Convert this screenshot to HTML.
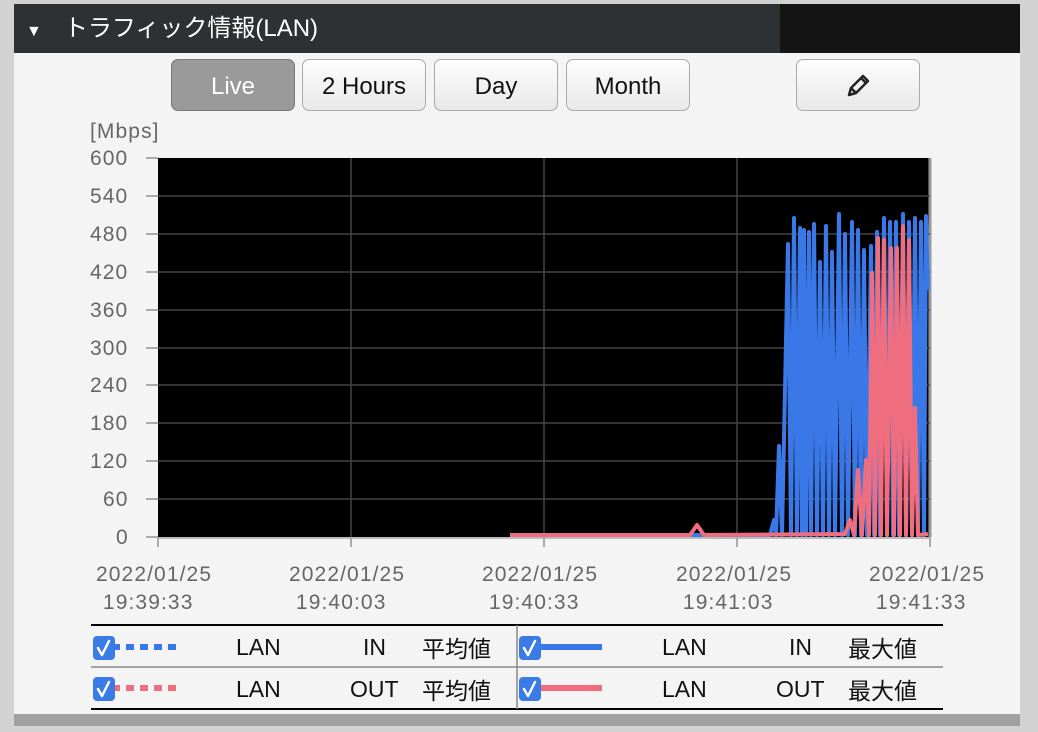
<!DOCTYPE html>
<html><head><meta charset="utf-8"><style>
body{margin:0;width:1038px;height:732px;background:#d2d2d2;font-family:"Liberation Sans","Noto Sans CJK JP",sans-serif;position:relative;overflow:hidden}
.panel{position:absolute;left:14px;top:4px;width:1006px;height:710px;background:#f4f4f4}
.shadow{position:absolute;left:14px;top:714px;width:1006px;height:12px;background:#a0a0a0}
.hdr{position:absolute;left:14px;top:4px;width:766px;height:49px;background:#2e3133;color:#fff;font-size:24px;line-height:49px}
.hdr2{position:absolute;left:780px;top:4px;width:240px;height:49px;background:#141414}
.btn{position:absolute;top:59px;height:52px;border:1px solid #aaa;border-radius:7px;background:linear-gradient(#fdfdfd,#e8e8e8);font-size:24px;text-align:center;line-height:54px;color:#111;box-sizing:border-box}
.lbl{position:absolute;font-size:21px;color:#666;letter-spacing:1.1px}
.t{position:absolute;font-size:23px;color:#111}
.cb{position:absolute;width:22px;height:22px;background:#3a7be6;border-radius:4px}
</style></head><body>
<div class="panel"></div><div class="shadow"></div>
<div class="hdr"><span style="font-size:16px;margin-left:12px;margin-right:22px">▼</span>トラフィック情報(LAN)</div>
<div class="hdr2"></div>
<div class="btn" style="left:171px;width:124px;background:#9a9a9a;border-color:#777;color:#fff">Live</div>
<div class="btn" style="left:302px;width:124px">2 Hours</div>
<div class="btn" style="left:434px;width:124px">Day</div>
<div class="btn" style="left:566px;width:124px">Month</div>
<div class="btn" style="left:796px;width:124px"><svg width="30" height="30" viewBox="0 0 30 30" style="margin-top:11px"><path d="M6 24 L8 17 L20 5 L25 10 L13 22 Z M8 17 L13 22 M18 7 L23 12" fill="none" stroke="#222" stroke-width="2.5" stroke-linejoin="round"/></svg></div>
<div class="lbl" style="left:90px;top:120px">[Mbps]</div>
<div class="lbl" style="left:90px;top:147px">600</div>
<div class="lbl" style="left:90px;top:185px">540</div>
<div class="lbl" style="left:90px;top:223px">480</div>
<div class="lbl" style="left:90px;top:261px">420</div>
<div class="lbl" style="left:90px;top:299px">360</div>
<div class="lbl" style="left:90px;top:337px">300</div>
<div class="lbl" style="left:90px;top:374px">240</div>
<div class="lbl" style="left:90px;top:412px">180</div>
<div class="lbl" style="left:90px;top:450px">120</div>
<div class="lbl" style="left:103px;top:488px">60</div>
<div class="lbl" style="left:116px;top:526px">0</div>
<div class="lbl" style="left:96px;top:561px;line-height:28px">2022/01/25<br>&nbsp;19:39:33</div>
<div class="lbl" style="left:289px;top:561px;line-height:28px">2022/01/25<br>&nbsp;19:40:03</div>
<div class="lbl" style="left:482px;top:561px;line-height:28px">2022/01/25<br>&nbsp;19:40:33</div>
<div class="lbl" style="left:676px;top:561px;line-height:28px">2022/01/25<br>&nbsp;19:41:03</div>
<div class="lbl" style="left:869px;top:561px;line-height:28px">2022/01/25<br>&nbsp;19:41:33</div>
<svg style="position:absolute;left:0;top:0" width="1038" height="732">
<rect x="158" y="158" width="772" height="379" fill="#000"/>
<line x1="930" y1="158" x2="930" y2="537" stroke="#999" stroke-width="3"/>
<line x1="158" y1="538" x2="930" y2="538" stroke="#bbb" stroke-width="2"/>
<g stroke="#444" stroke-width="1.5">
<line x1="351" y1="158" x2="351" y2="537"/><line x1="544" y1="158" x2="544" y2="537"/><line x1="737" y1="158" x2="737" y2="537"/>
<line x1="158" y1="196" x2="930" y2="196"/><line x1="158" y1="234" x2="930" y2="234"/><line x1="158" y1="272" x2="930" y2="272"/><line x1="158" y1="310" x2="930" y2="310"/><line x1="158" y1="348" x2="930" y2="348"/><line x1="158" y1="385" x2="930" y2="385"/><line x1="158" y1="423" x2="930" y2="423"/><line x1="158" y1="461" x2="930" y2="461"/><line x1="158" y1="499" x2="930" y2="499"/>
</g>
<g stroke="#aaa" stroke-width="2"><line x1="146" y1="158" x2="158" y2="158"/><line x1="146" y1="196" x2="158" y2="196"/><line x1="146" y1="234" x2="158" y2="234"/><line x1="146" y1="272" x2="158" y2="272"/><line x1="146" y1="310" x2="158" y2="310"/><line x1="146" y1="348" x2="158" y2="348"/><line x1="146" y1="385" x2="158" y2="385"/><line x1="146" y1="423" x2="158" y2="423"/><line x1="146" y1="461" x2="158" y2="461"/><line x1="146" y1="499" x2="158" y2="499"/><line x1="146" y1="537" x2="158" y2="537"/>
<line x1="158" y1="537" x2="158" y2="547"/><line x1="351" y1="537" x2="351" y2="547"/><line x1="544" y1="537" x2="544" y2="547"/><line x1="737" y1="537" x2="737" y2="547"/><line x1="930" y1="537" x2="930" y2="547"/></g>
<polyline fill="none" stroke="#3a78e8" stroke-width="4" stroke-linejoin="round" points="510,535 770,535 774,520 776,535 779,446 782,535 788,244 791,535 794,218 797,535 800,228 802,535 804,230 806,535 809,232 811,535 814,224 817,535 820,262 823,535 826,226 829,535 832,252 835,535 839,214 842,535 845,234 848,535 852,222 855,535 858,230 861,535 864,250 867,535 871,246 874,535 877,232 880,535 884,218 887,535 890,222 893,535 896,222 899,535 903,214 906,535 909,222 912,535 915,218 918,535 921,222 924,535 926,216 928,290"/>
<polyline fill="none" stroke="#ee6e80" stroke-width="4" stroke-linejoin="round" points="510,535 690,535 697,525 704,535 845,534 850,520 854,535 858,470 862,535 866,460 869,535 872,273 875,535 878,238 881,535 884,240 887,535 891,248 894,535 897,248 900,535 903,226 906,535 909,240 912,535 915,408 918,535 928,534"/>
<line x1="91" y1="625" x2="943" y2="625" stroke="#000" stroke-width="2"/>
<line x1="91" y1="667" x2="943" y2="667" stroke="#888" stroke-width="1.5"/>
<line x1="91" y1="709" x2="943" y2="709" stroke="#000" stroke-width="2"/>
<line x1="517" y1="625" x2="517" y2="709" stroke="#888" stroke-width="1.5"/>
<line x1="112" y1="647" x2="178" y2="647" stroke="#3a78e8" stroke-width="6" stroke-dasharray="8,6"/>
<line x1="112" y1="688" x2="178" y2="688" stroke="#ee6e80" stroke-width="6" stroke-dasharray="8,6"/>
<line x1="538" y1="647" x2="602" y2="647" stroke="#3a78e8" stroke-width="6"/>
<line x1="538" y1="688" x2="602" y2="688" stroke="#ee6e80" stroke-width="6"/>
<g fill="#3a7be6"><rect x="93" y="636" width="22" height="24" rx="4"/><rect x="93" y="677" width="22" height="24" rx="4"/><rect x="519" y="636" width="22" height="24" rx="4"/><rect x="519" y="677" width="22" height="24" rx="4"/></g>
<g fill="none" stroke="#fff" stroke-width="2.5" stroke-linecap="round" stroke-linejoin="round"><path d="M98 648 L102 655 L109 641"/><path d="M98 689 L102 696 L109 682"/><path d="M524 648 L528 655 L535 641"/><path d="M524 689 L528 696 L535 682"/></g>
</svg>
<div class="t" style="left:236px;top:634px">LAN</div><div class="t" style="left:363px;top:634px">IN</div><div class="t" style="left:422px;top:630px">平均値</div>
<div class="t" style="left:236px;top:676px">LAN</div><div class="t" style="left:350px;top:676px">OUT</div><div class="t" style="left:422px;top:672px">平均値</div>
<div class="t" style="left:662px;top:634px">LAN</div><div class="t" style="left:789px;top:634px">IN</div><div class="t" style="left:848px;top:630px">最大値</div>
<div class="t" style="left:662px;top:676px">LAN</div><div class="t" style="left:776px;top:676px">OUT</div><div class="t" style="left:848px;top:672px">最大値</div>
</body></html>
